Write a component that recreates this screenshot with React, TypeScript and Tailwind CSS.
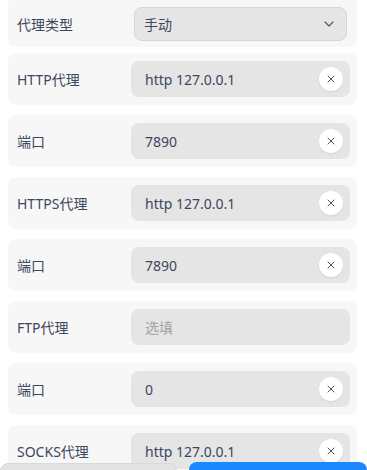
import { ChevronDown, X } from "lucide-react";

const font = { fontFamily: '"Noto Sans", "Noto Sans CJK SC", sans-serif' };

interface RowProps {
	label: string;
	value?: string;
	placeholder?: string;
}

const FieldRow = ({ label, value, placeholder }: RowProps) => {
	return (
		<div className="flex h-[52px] shrink-0 items-center rounded-lg bg-[#f7f7f7] pl-[9px] pr-[7px]">
			<div className="w-[114px] text-[14px] text-[#3d475e]">{label}</div>
			<div className="flex h-[36px] flex-1 items-center rounded-lg bg-[#e5e5e5] pl-[14px] pr-[7px]">
				{value ? (
					<span className="flex-1 text-[14px] text-[#3d475e]">{value}</span>
				) : (
					<span className="flex-1 text-[14px] text-[#a3a3a3]">{placeholder}</span>
				)}
				{value && (
					<div className="flex h-[24px] w-[24px] items-center justify-center rounded-full bg-white shadow-[0_1px_2px_rgba(0,0,0,0.08)]">
						<X size={12} strokeWidth={2} className="text-[#4a5066]" />
					</div>
				)}
			</div>
		</div>
	);
};

export default function App() {
	const rows: RowProps[] = [
		{ label: "HTTP代理", value: "http 127.0.0.1" },
		{ label: "端口", value: "7890" },
		{ label: "HTTPS代理", value: "http 127.0.0.1" },
		{ label: "端口", value: "7890" },
		{ label: "FTP代理", placeholder: "选填" },
		{ label: "端口", value: "0" },
		{ label: "SOCKS代理", value: "http 127.0.0.1" },
	];

	return (
		<div className="relative h-[470px] w-[367px] overflow-hidden bg-white" style={font}>
			<div className="mt-[-4px] flex flex-col gap-[10px] pl-[8px] pr-[10px]">
				<div className="mb-[-4px] flex h-[51px] shrink-0 items-start rounded-lg bg-[#f7f7f7] pl-[9px] pr-[10px] pt-[11px]">
					<div className="flex h-[34px] w-[117px] items-center text-[14px] text-[#3d475e]">代理类型</div>
					<div className="flex h-[34px] flex-1 items-center rounded-lg border border-[#d6d6d6] bg-[#e6e6e6] pl-[9px] pr-[9px]">
						<span className="flex-1 text-[14px] text-[#3d475e]">手动</span>
						<ChevronDown size={16} strokeWidth={1.6} className="text-[#4a5066]" />
					</div>
				</div>
				{rows.map((r, i) => (
					<FieldRow key={i} {...r} />
				))}
			</div>
			<div className="absolute left-0 top-[462px] flex w-[367px] gap-[12px]">
				<div className="mt-[1px] h-[36px] w-[177px] shrink-0 rounded-lg border border-[#d9d9d9] bg-[#e3e3e3]" />
				<div className="h-[36px] flex-1 rounded-lg bg-[#1b87ff]" />
			</div>
		</div>
	);
}
